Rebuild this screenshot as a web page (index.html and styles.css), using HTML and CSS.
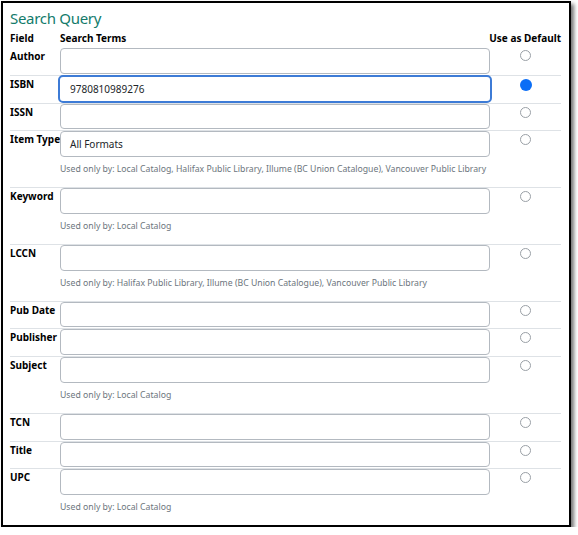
FILE: index.html
```html
<!DOCTYPE html>
<html>
<head>
<meta charset="utf-8">
<link rel="stylesheet" href="styles.css">
</head>
<body>
<div class="frame">
  <h2 class="title">Search Query</h2>
  <div class="grid">
    <div class="head">Field</div>
    <div class="head">Search Terms</div>
    <div class="head right">Use as Default</div>

    <div class="row first"><div class="label">Author</div><div class="field"><div class="input"></div></div><div class="radio-cell"><span class="radio"></span></div></div>
    <div class="row"><div class="label">ISBN</div><div class="field"><div class="input focus">9780810989276</div></div><div class="radio-cell"><span class="radio checked"></span></div></div>
    <div class="row"><div class="label">ISSN</div><div class="field"><div class="input"></div></div><div class="radio-cell"><span class="radio"></span></div></div>
    <div class="row"><div class="label">Item Type</div><div class="field"><div class="input">All Formats</div><div class="help">Used only by: Local Catalog, Halifax Public Library, Illume (BC Union Catalogue), Vancouver Public Library</div></div><div class="radio-cell"><span class="radio"></span></div></div>
    <div class="row"><div class="label">Keyword</div><div class="field"><div class="input"></div><div class="help">Used only by: Local Catalog</div></div><div class="radio-cell"><span class="radio"></span></div></div>
    <div class="row"><div class="label">LCCN</div><div class="field"><div class="input"></div><div class="help">Used only by: Halifax Public Library, Illume (BC Union Catalogue), Vancouver Public Library</div></div><div class="radio-cell"><span class="radio"></span></div></div>
    <div class="row"><div class="label">Pub Date</div><div class="field"><div class="input"></div></div><div class="radio-cell"><span class="radio"></span></div></div>
    <div class="row"><div class="label">Publisher</div><div class="field"><div class="input"></div></div><div class="radio-cell"><span class="radio"></span></div></div>
    <div class="row"><div class="label">Subject</div><div class="field"><div class="input"></div><div class="help">Used only by: Local Catalog</div></div><div class="radio-cell"><span class="radio"></span></div></div>
    <div class="row"><div class="label">TCN</div><div class="field"><div class="input"></div></div><div class="radio-cell"><span class="radio"></span></div></div>
    <div class="row"><div class="label">Title</div><div class="field"><div class="input"></div></div><div class="radio-cell"><span class="radio"></span></div></div>
    <div class="row"><div class="label">UPC</div><div class="field"><div class="input"></div><div class="help">Used only by: Local Catalog</div></div><div class="radio-cell"><span class="radio"></span></div></div>
  </div>
</div>
</body>
</html>
```

FILE: styles.css
```css
html, body {
  margin: 0;
  padding: 0;
  background: #fff;
}
body {
  font-family: "Noto Sans", "Open Sans", sans-serif;
  color: #000;
}
.frame {
  box-sizing: border-box;
  margin: 1px 0 0 1px;
  width: 570px;
  height: 526px;
  border: 2px solid #000;
  background: #fff;
  box-shadow: 3px 3px 4px rgba(0,0,0,0.55);
  padding: 0 8px 0 7px;
}
.title {
  margin: 0;
  padding-top: 5px;
  font-size: 15px;
  letter-spacing: -0.3px;
  font-weight: normal;
  color: #137b6b;
  line-height: 20px;
  height: 26px;
  box-sizing: border-box;
}
.grid {
  display: grid;
  grid-template-columns: 50px 430px 71px;
}
.head {
  font-size: 10px;
  font-weight: bold;
  line-height: 15px;
  height: 18px;
  padding-top: 2px;
  box-sizing: border-box;
  white-space: nowrap;
}
.head.right {
  justify-self: end;
}
.row {
  display: contents;
}
.row > div {
  border-top: 1px solid #dee2e6;
}
.row.first > div {
  border-top: none;
}
.label {
  font-size: 10px;
  font-weight: bold;
  line-height: 14px;
  padding-top: 1px;
  white-space: nowrap;
}
.row.first .label {
  padding-top: 2px;
}
.field {
  padding: 0 0 1px 0;
}
.row.first .field {
  padding-top: 1px;
}
.input {
  box-sizing: border-box;
  height: 25.75px;
  border: 1px solid #b3b9c0;
  border-radius: 4px;
  font-size: 10px;
  line-height: 23px;
  padding: 1px 0 0 9px;
  color: #212529;
}
.input.focus {
  border: 2px solid #3d7bd6;
  border-radius: 5px;
  margin: -1px -2px -1px -2px;
  height: 27.75px;
  line-height: 23px;
  padding: 1px 0 0 10px;
}
.help {
  font-size: 8.7px;
  color: #6c757d;
  line-height: 14px;
  padding: 5px 0 10px 0;
  white-space: nowrap;
}
.radio-cell {
  display: flex;
  justify-content: center;
  padding-top: 3px;
}
.radio {
  box-sizing: border-box;
  display: block;
  width: 11px;
  height: 11px;
  border: 1px solid #9aa0a6;
  border-radius: 50%;
  background: #fff;
}
.radio.checked {
  width: 12px;
  height: 12px;
  border: none;
  background: #0b6ef6;
}
```
